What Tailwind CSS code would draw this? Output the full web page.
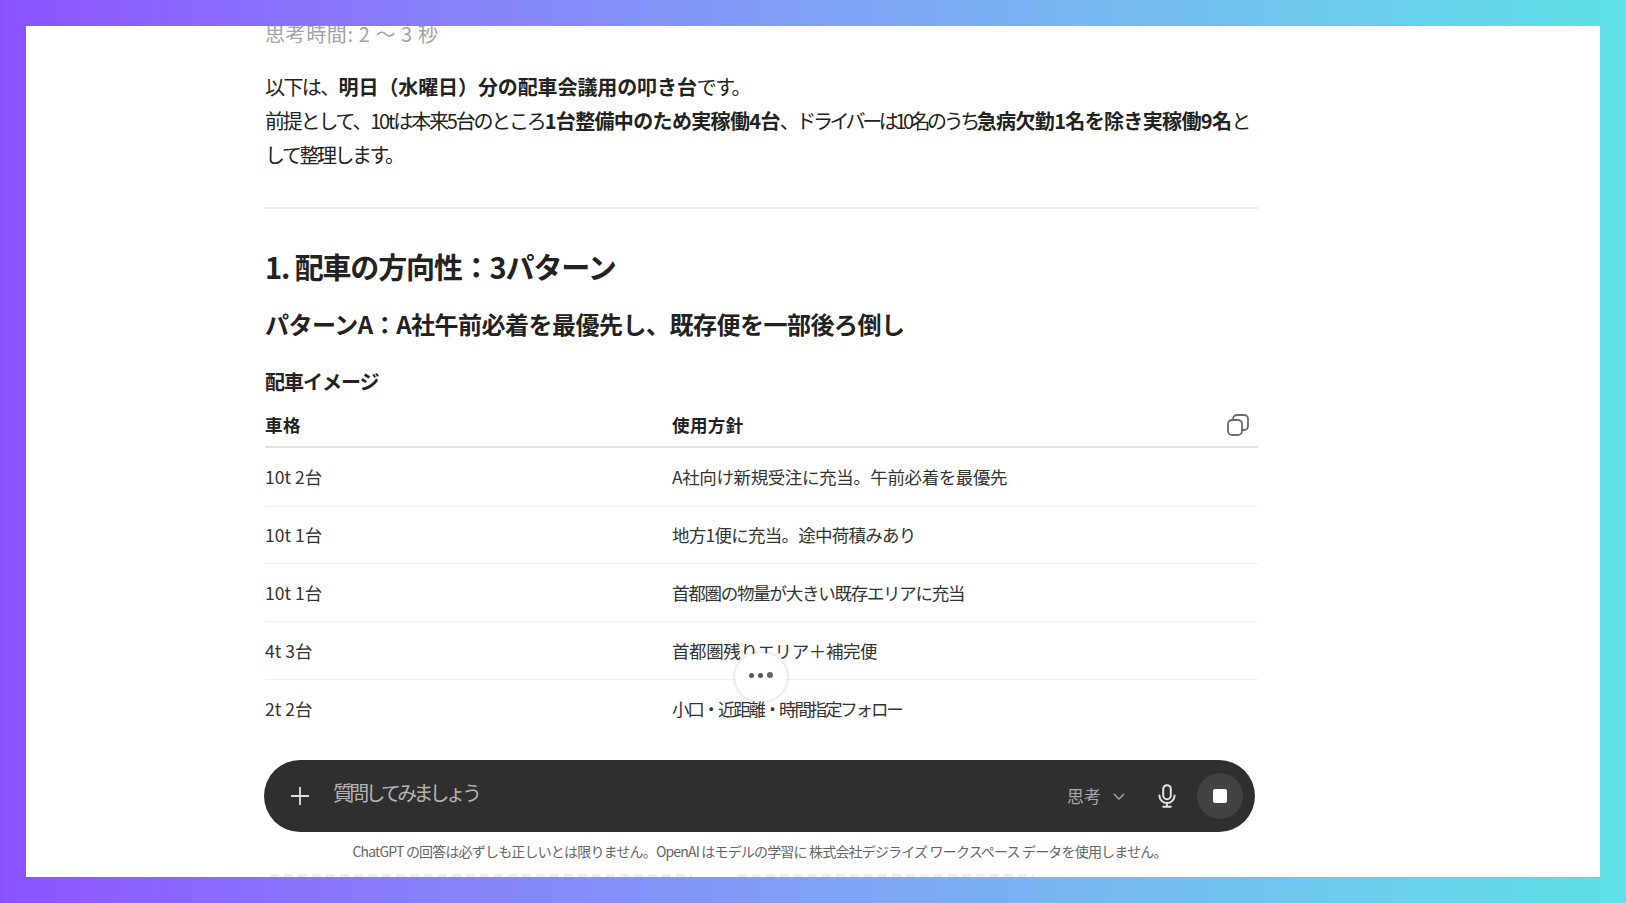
<!DOCTYPE html>
<html lang="ja">
<head>
  <meta charset="UTF-8">
  <title>ChatGPT</title>
  <script src="https://cdn.jsdelivr.net/npm/@tailwindcss/browser@4"></script>
</head>
<body class="h-[903px] overflow-hidden bg-gradient-to-r from-[#8c52ff] to-[#5ce1e6] p-[26px] font-['Noto_Sans_CJK_JP','Liberation_Sans',sans-serif] text-[#222]">
  <div class="relative h-[851px] overflow-hidden bg-white pl-[239px] pr-[342px]">
    <!-- message -->
    <div class="-mt-[6px] text-[20px] leading-[28px] tracking-[0.6px] text-[#a3a3a3]">思考時間: 2 〜 3 秒</div>

    <p class="mt-[22px] whitespace-nowrap text-[20px] leading-[34px] tracking-[-1.6px]">
      以下は、<b class="font-semibold tracking-[-0.1px]">明日（水曜日）分の配車会議用の叩き台</b>です。<br>
      <span class="tracking-[-2.2px]">前提として、10tは本来5台のところ</span><b class="font-semibold tracking-[-0.65px]">1台整備中のため実稼働4台</b><span class="tracking-[-3.45px]">、ドライバーは10名のうち</span><b class="font-semibold tracking-[-0.65px]">急病欠勤1名を除き実稼働9名</b>と<br>
      <span class="tracking-[-2.5px]">して整理します。</span>
    </p>

    <hr class="mt-[35px] border-t-2 border-[#ececec]">

    <h2 class="mt-[37px] text-[29px] leading-[40px] font-semibold tracking-[-1.15px]">1. 配車の方向性：3パターン</h2>
    <h3 class="mt-[21px] text-[24px] leading-[34px] font-semibold tracking-[-0.5px]">パターンA：A社午前必着を最優先し、既存便を一部後ろ倒し</h3>
    <h4 class="mt-[26px] text-[20px] leading-[30px] font-semibold tracking-[-1px]">配車イメージ</h4>

    <div class="relative mt-[9px]">
      <table class="w-full border-collapse text-[17.5px] tracking-[-0.4px]">
        <thead>
          <tr class="h-[41px] border-b-2 border-[#e2e2e2] text-left">
            <th class="w-[407px] pb-[2px] font-semibold tracking-[0.6px]">車格</th>
            <th class="pb-[2px] font-semibold tracking-[0.4px]">使用方針</th>
          </tr>
        </thead>
        <tbody class="text-[#333]">
          <tr class="h-[59px] border-b border-[#f0f0f0]"><td class="pt-[1px] tracking-[0px]">10t 2台</td><td class="pt-[1px]">A社向け新規受注に充当。午前必着を最優先</td></tr>
          <tr class="h-[57px] border-b border-[#f0f0f0]"><td class="pt-[2px] tracking-[0px]">10t 1台</td><td class="pt-[2px] tracking-[-0.75px]">地方1便に充当。途中荷積みあり</td></tr>
          <tr class="h-[58px] border-b border-[#f0f0f0]"><td class="pt-[2px] tracking-[0px]">10t 1台</td><td class="pt-[2px] tracking-[-1.26px]">首都圏の物量が大きい既存エリアに充当</td></tr>
          <tr class="h-[58px] border-b border-[#f0f0f0]"><td class="pt-[2px] tracking-[0px]">4t 3台</td><td class="pt-[2px]">首都圏残りエリア＋補完便</td></tr>
          <tr class="h-[58px]"><td class="pt-[1px] tracking-[0px]">2t 2台</td><td class="pt-[1px] tracking-[-2.2px]">小口・近距離・時間指定フォロー</td></tr>
        </tbody>
      </table>
      <!-- copy table -->
      <svg class="absolute right-[8px] top-[7px] h-[24px] w-[24px] text-[#6b6b6b]" viewBox="0 0 24 24" fill="none" stroke="currentColor" stroke-width="1.8">
        <rect x="2" y="7" width="14" height="15" rx="4"></rect>
        <path d="M7 7V6a4 4 0 0 1 4-4h7a4 4 0 0 1 4 4v7a4 4 0 0 1-4 4h-2"></path>
      </svg>
    </div>

    <!-- scroll down -->
    <div class="absolute left-[709px] top-[627px] flex h-[48px] w-[52px] items-center justify-center gap-[4px] rounded-full bg-white pb-[4px] shadow-[0_0_4px_rgba(0,0,0,0.22)]">
      <span class="h-[5px] w-[5px] rounded-full bg-[#555]"></span>
      <span class="h-[5px] w-[5px] rounded-full bg-[#555]"></span>
      <span class="h-[6px] w-[6px] rounded-full bg-[#666]"></span>
    </div>

    <!-- composer + note, pinned over the scrolled content -->
    <div class="absolute left-[238px] top-[734px] w-[991px]">
      <div class="flex h-[72px] items-center rounded-full bg-[#2f2f2f] pl-[24px] pr-[12px] text-[#b4b4b4]">
        <svg class="h-[24px] w-[24px] text-[#e0e0e0]" viewBox="0 0 24 24" fill="none" stroke="currentColor" stroke-width="1.8"><path d="M12 3v18M3 12h18"></path></svg>
        <span class="ml-[21px] flex-1 pb-[6px] text-[20px] tracking-[-3.8px]">質問してみましょう</span>
        <span class="text-[17px] text-[#a8a8a8]">思考</span>
        <svg class="ml-[11px] h-[14px] w-[14px] text-[#a8a8a8]" viewBox="0 0 14 14" fill="none" stroke="currentColor" stroke-width="1.4"><path d="M2 5l5 5 5-5"></path></svg>
        <svg class="ml-[28px] h-[26px] w-[26px] text-[#e6e6e6]" viewBox="0 0 24 24" fill="none" stroke="currentColor" stroke-width="1.8" stroke-linecap="round"><rect x="8.5" y="2" width="7" height="13" rx="3.5"></rect><path d="M5 11.5a7 7 0 0 0 14 0M12 18.5V22M8.5 22h7"></path></svg>
        <span class="ml-[17px] flex h-[46px] w-[46px] items-center justify-center rounded-full bg-[#424242]"><span class="h-[14px] w-[14px] rounded-[2px] bg-white"></span></span>
      </div>
      <div class="mt-[9px] text-center text-[14px] leading-[20px] tracking-[-0.82px] text-[#666]">ChatGPT の回答は必ずしも正しいとは限りません。OpenAI はモデルの学習に 株式会社デジライズ ワークスペース データを使用しません。</div>
      <!-- tops of the next, cut-off line -->
      <div class="mt-[13px] ml-[6px] flex gap-[46px]">
        <span class="h-[3px] w-[422px] bg-[repeating-linear-gradient(90deg,#eeeeee_0_9px,transparent_9px_14px)]"></span>
        <span class="h-[3px] w-[296px] bg-[repeating-linear-gradient(90deg,#eeeeee_0_9px,transparent_9px_14px)]"></span>
      </div>
    </div>
  </div>
</body>
</html>
